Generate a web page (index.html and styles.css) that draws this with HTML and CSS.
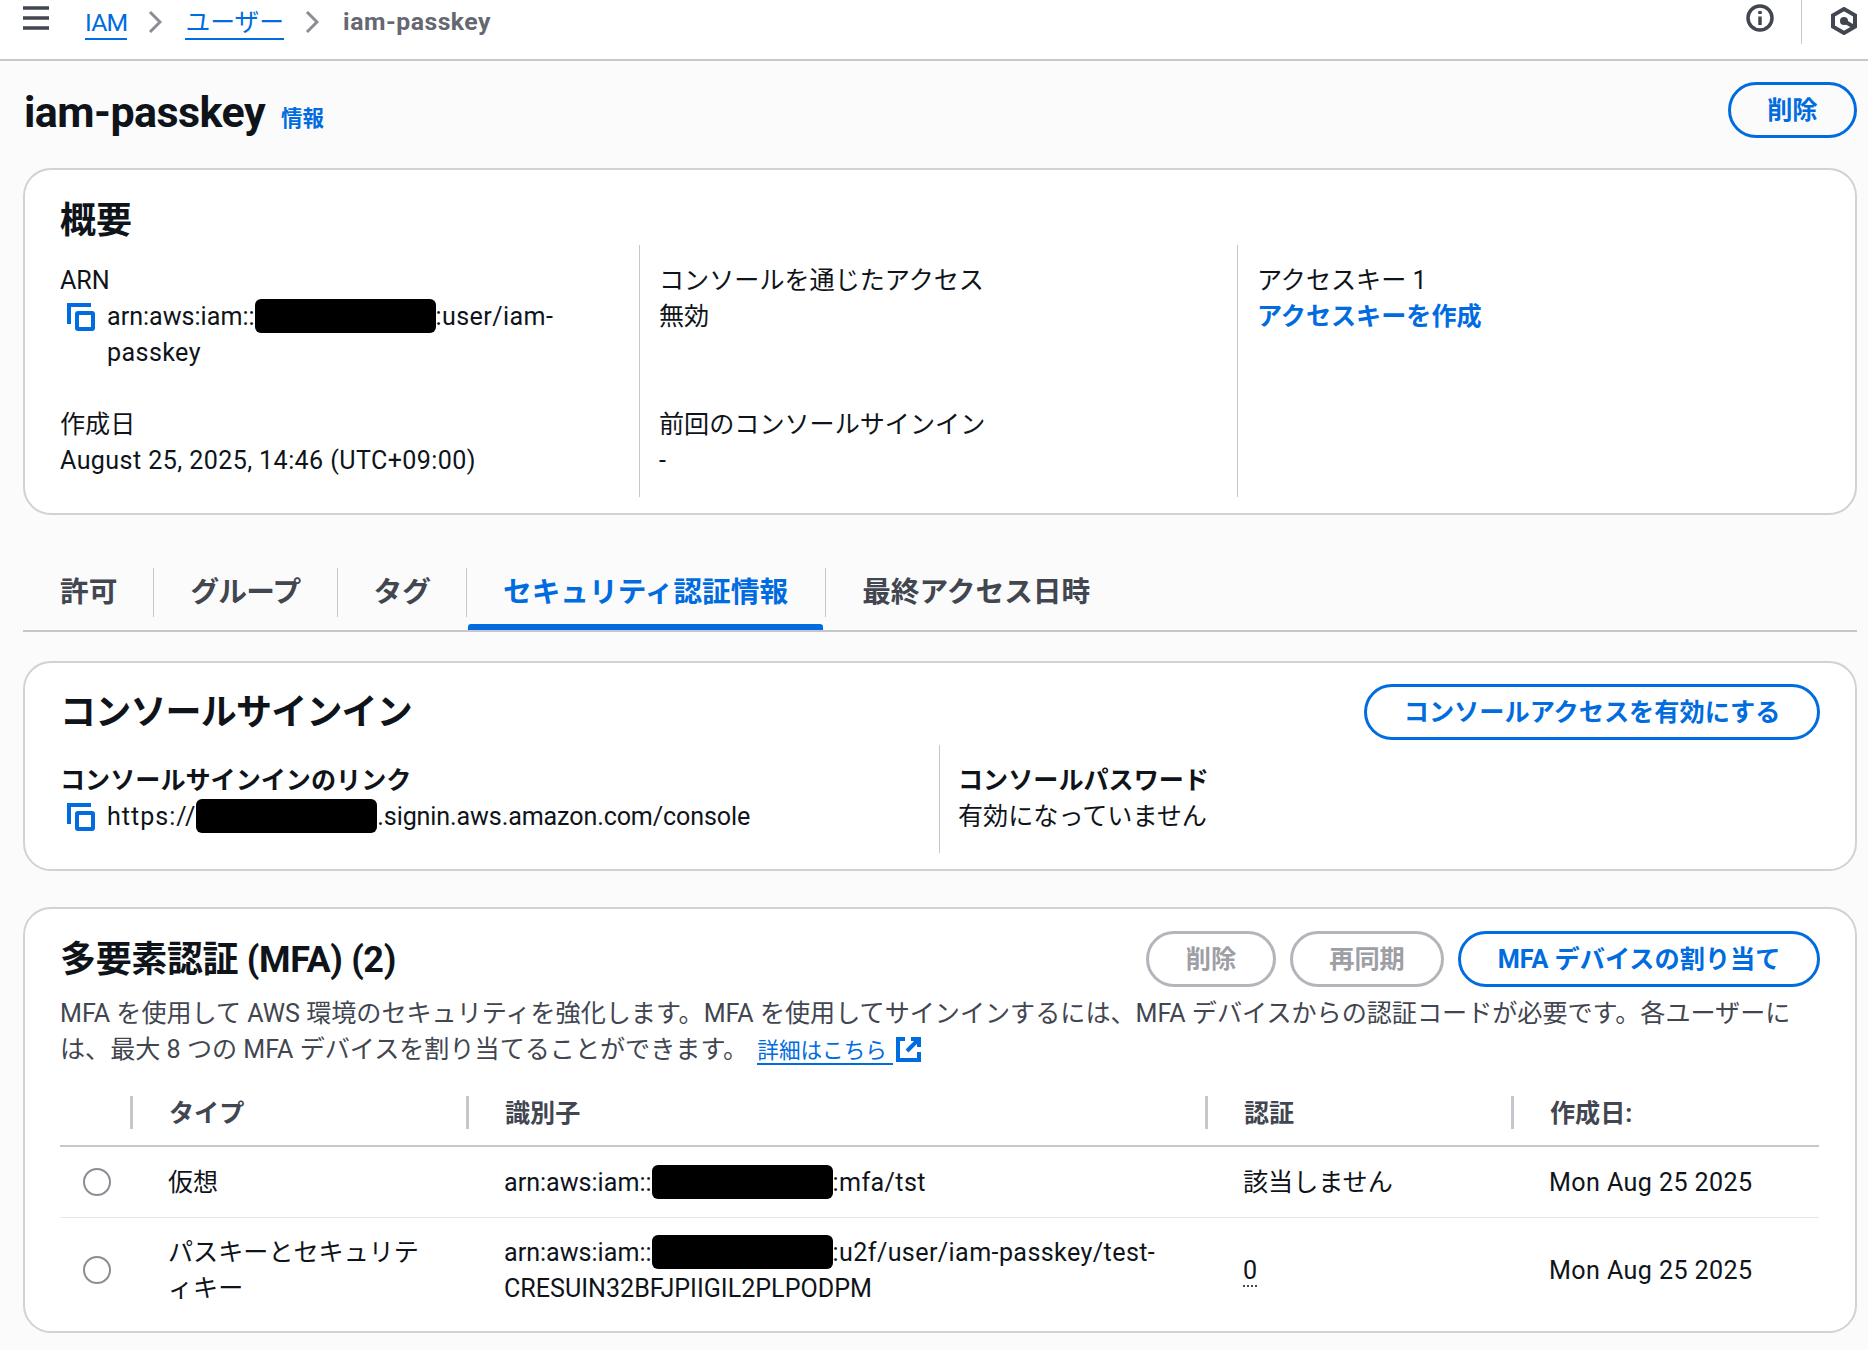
FILE: index.html
```html
<!DOCTYPE html>
<html lang="ja">
<head>
<meta charset="utf-8">
<title>iam-passkey</title>
<link rel="stylesheet" href="styles.css">
</head>
<body>
<header class="topbar">
  <svg class="menu-icon" viewBox="0 0 26 24"><path d="M0 2h26M0 12h26M0 22h26"/></svg>
  <nav class="crumbs">
    <a class="crumb-link crumb-iam">IAM</a>
    <svg class="chev" viewBox="0 0 14 24"><path d="M2 2l10 10L2 22"/></svg>
    <a class="crumb-link">ユーザー</a>
    <svg class="chev" viewBox="0 0 14 24"><path d="M2 2l10 10L2 22"/></svg>
    <span class="crumb-current">iam-passkey</span>
  </nav>
  <div class="top-actions">
    <svg class="info-icon" viewBox="0 0 28 28"><circle cx="14" cy="14" r="12"/><path d="M14 12.500v8.500M14 7v3"/></svg>
    <span class="top-sep"></span>
    <svg class="hex-icon" viewBox="0 0 26 28"><path class="hex-line" d="M13 2l11 6.300v11.400L13 26 2 19.700V8.300z"/><circle class="hex-dot" cx="13" cy="14" r="4"/><path class="hex-line" d="M13 14l10 6"/></svg>
  </div>
</header>
<main class="page">
  <div class="page-head">
    <h1 class="page-title">iam-passkey</h1>
    <a class="info-link">情報</a>
    <button class="btn head-btn">削除</button>
  </div>

  <section class="card summary">
    <h2 class="card-title">概要</h2>
    <div class="summary-grid">
      <div class="summary-col">
        <div>
          <div>ARN</div>
          <div class="copy-row">
            <svg class="copy-icon" viewBox="0 0 28 28"><path d="M2 21V2h22"/><rect x="10" y="10" width="16" height="16" rx="1"/></svg>
            <span class="copy-text">arn:aws:iam::<span class="redact"></span><span class="spaced">:user/iam-passkey</span></span>
          </div>
        </div>
        <div>
          <div>作成日</div>
          <div class="spaced">August 25, 2025, 14:46 (UTC+09:00)</div>
        </div>
      </div>
      <div class="summary-col">
        <div>
          <div>コンソールを通じたアクセス</div>
          <div>無効</div>
        </div>
        <div>
          <div>前回のコンソールサインイン</div>
          <div>-</div>
        </div>
      </div>
      <div class="summary-col last">
        <div>
          <div>アクセスキー 1</div>
          <a class="strong-link">アクセスキーを作成</a>
        </div>
      </div>
    </div>
  </section>

  <div class="tabs">
    <a class="tab">許可</a>
    <a class="tab">グループ</a>
    <a class="tab">タグ</a>
    <a class="tab active">セキュリティ認証情報</a>
    <a class="tab">最終アクセス日時</a>
  </div>

  <section class="card signin">
    <div class="card-head">
      <h2 class="card-title">コンソールサインイン</h2>
      <button class="btn">コンソールアクセスを有効にする</button>
    </div>
    <div class="signin-grid">
      <div class="signin-col">
        <div class="field-label">コンソールサインインのリンク</div>
        <div class="copy-row">
          <svg class="copy-icon" viewBox="0 0 28 28"><path d="M2 21V2h22"/><rect x="10" y="10" width="16" height="16" rx="1"/></svg>
          <span class="copy-text"><span class="scheme">https://</span><span class="redact"></span><span class="host">.signin.aws.amazon.com/console</span></span>
        </div>
      </div>
      <div class="signin-col second">
        <div class="field-label">コンソールパスワード</div>
        <div>有効になっていません</div>
      </div>
    </div>
  </section>

  <section class="card mfa">
    <div class="card-head">
      <h2 class="card-title">多要素認証 (MFA) (2)</h2>
      <div class="btn-group">
        <button class="btn disabled">削除</button>
        <button class="btn disabled">再同期</button>
        <button class="btn">MFA デバイスの割り当て</button>
      </div>
    </div>
    <p class="desc">MFA を使用して AWS 環境のセキュリティを強化します。MFA を使用してサインインするには、MFA デバイスからの認証コードが必要です。各ユーザーには、最大 8 つの MFA デバイスを割り当てることができます。 <a class="ext-link">詳細はこちら</a><svg class="ext-icon" viewBox="0 0 25 25"><path d="M9 2H2v21h21v-8M15 2h8v8M22 3L11 14"/></svg></p>
    <table class="mfa-table">
      <colgroup><col class="c-radio"><col class="c-type"><col class="c-id"><col class="c-auth"><col class="c-date"></colgroup>
      <thead>
        <tr><th></th><th><span>タイプ</span></th><th><span>識別子</span></th><th><span>認証</span></th><th><span>作成日:</span></th></tr>
      </thead>
      <tbody>
        <tr>
          <td class="radio-cell"><span class="radio"></span></td>
          <td>仮想</td>
          <td>arn:aws:iam::<span class="redact"></span><span class="spaced">:mfa/tst</span></td>
          <td>該当しません</td>
          <td class="spaced">Mon Aug 25 2025</td>
        </tr>
        <tr>
          <td class="radio-cell"><span class="radio"></span></td>
          <td>パスキーとセキュリティキー</td>
          <td>arn:aws:iam::<span class="redact"></span><span class="spaced">:u2f/user/iam-passkey/test-</span>CRESUIN32BFJPIIGIL2PLPODPM</td>
          <td><span class="dotted">0</span></td>
          <td class="spaced">Mon Aug 25 2025</td>
        </tr>
      </tbody>
    </table>
  </section>
</main>
</body>
</html>
```
FILE: styles.css
```css
* { box-sizing: border-box; }
html, body { margin: 0; padding: 0; }
body {
  width: 1868px;
  height: 1350px;
  overflow: hidden;
  background: #fbfbfb;
  color: #0f141a;
  font-family: Roboto, "Noto Sans CJK JP", sans-serif;
  font-size: 25.1px;
  line-height: 36px;
}
a { color: #006ce0; }
h1, h2, p { margin: 0; }
.spaced { letter-spacing: .4px; }
.scheme { letter-spacing: 1px; }
.host { letter-spacing: -.12px; }

.topbar {
  height: 61px;
  background: #fff;
  border-bottom: 2px solid #c6c6cd;
  display: flex;
  align-items: flex-start;
  padding-left: 23px;
}
.menu-icon { width: 26px; height: 24px; margin-top: 6px; fill: none; stroke: #424650; stroke-width: 3.5; }
.crumbs { display: flex; align-items: center; margin-left: 36px; height: 43px; color: #424650; font-size: 24.8px; }
.crumb-link { border-bottom: 2px solid #006ce0; line-height: 39px; height: 37px; }
.crumb-iam { letter-spacing: -.8px; }
.crumb-current { font-weight: 700; color: #656871; line-height: 39px; letter-spacing: .5px; margin-left: 1px; }
.chev { width: 14px; height: 24px; margin: 0 23px 0 21px; fill: none; stroke: #8c8c94; stroke-width: 3; }
.top-actions { margin-left: auto; display: flex; align-items: flex-start; }
.info-icon { width: 28px; height: 28px; margin-top: 4px; fill: none; stroke: #424650; stroke-width: 3.5; }
.top-sep { width: 1px; height: 44px; background: #c6c6cd; margin: 0 29px 0 27px; }
.hex-icon { width: 26px; height: 28px; margin-top: 7px; margin-right: 11px; }
.hex-line { fill: none; stroke: #424650; stroke-width: 4; }
.hex-dot { fill: #424650; }

.page { padding: 0 11px 0 23px; }
.page-head { display: flex; align-items: center; height: 107px; }
.page-title { font-size: 43px; line-height: 56px; font-weight: 700; margin: -6px 0 0 1px; letter-spacing: -.55px; }
.info-link { font-size: 21.5px; font-weight: 600; margin: 8px 0 0 16px; }
.head-btn { margin-left: auto; margin-top: -10px; }

.btn {
  height: 56px;
  padding: 2px 36.5px 0;
  border: 3px solid #006ce0;
  border-radius: 28px;
  background: transparent;
  color: #006ce0;
  font: 700 25.2px/36px Roboto, "Noto Sans CJK JP", sans-serif;
  white-space: nowrap;
}
.btn.disabled { border-color: #b4b4bb; color: #9e9ea5; }

.card {
  background: #fff;
  border: 2px solid #d1d1d6;
  border-radius: 28px;
  padding: 0 35px;
}
.card-title { font-size: 36px; line-height: 50px; font-weight: 700; padding-top: 2px; }

.summary { height: 347px; padding-top: 25px; }
.summary .card-title { height: 50px; padding-top: 1px; }
.summary-grid { display: grid; grid-template-columns: 580px 598px 1fr; height: 252px; }
.summary-col {
  display: grid;
  grid-template-rows: 108px 72px;
  row-gap: 36px;
  padding-top: 18px;
  padding-left: 19px;
  border-right: 1px solid #c6c6cd;
}
.summary-col:first-child { padding-left: 0; }
.summary-col.last { border-right: 0; }
.copy-row { display: flex; align-items: flex-start; padding-left: 7px; }
.copy-icon { flex: none; width: 28px; height: 28px; margin: 4px 12px 0 0; fill: none; stroke: #006ce0; stroke-width: 4; }
.copy-text { max-width: 510px; }
.redact {
  display: inline-block;
  width: 181px;
  height: 34px;
  margin: -8px 0 -4px;
  vertical-align: middle;
  background: #000;
  border-radius: 6px;
}
.strong-link { font-weight: 700; }

.tabs {
  display: flex;
  height: 117px;
  padding-top: 53px;
  border-bottom: 2px solid #c6c6cd;
  margin-bottom: 29px;
}
.tab {
  height: 62px;
  padding: 0 37px;
  font-size: 28.7px;
  line-height: 48px;
  font-weight: 700;
  color: #424650;
  position: relative;
}
.tab:nth-child(1) { padding-right: 36px; }
.tab:nth-child(2) { letter-spacing: -.7px; padding-right: 36px; }
.tab:nth-child(3) { padding-right: 35px; }
.tab + .tab::before {
  content: "";
  position: absolute;
  left: 0;
  top: 0;
  height: 49px;
  width: 1px;
  background: #c6c6cd;
}
.tab.active { color: #006ce0; }
.tab.active::after {
  content: "";
  position: absolute;
  left: 2px;
  right: 2px;
  bottom: 0;
  height: 6px;
  background: #006ce0;
  border-radius: 3px 3px 0 0;
}

.signin { height: 210px; padding-top: 21px; }
.signin .card-title { letter-spacing: -.8px; }
.card-head { display: flex; justify-content: space-between; align-items: center; height: 56px; }
.signin-grid { display: grid; grid-template-columns: 879px 1fr; margin-top: 5px; height: 108px; }
.signin-col { padding-top: 18px; }
.signin-col.second { padding-left: 18px; border-left: 1px solid #c6c6cd; }
.field-label { font-weight: 700; }
.signin .copy-text { max-width: none; }

.mfa { margin-top: 36px; height: 426px; padding-top: 22px; }
.mfa .card-title { letter-spacing: -.35px; }
.btn-group { display: flex; gap: 14px; }
.desc { margin-top: 9px; color: #424650; width: 1762px; }
.ext-link { font-size: 21.6px; border-bottom: 2px solid #006ce0; padding-right: 6px; margin-left: 3px; }
.ext-icon { width: 25px; height: 25px; vertical-align: -4px; margin-left: 3px; fill: none; stroke: #006ce0; stroke-width: 4; }

.mfa-table { width: 1759px; border-collapse: collapse; table-layout: fixed; margin-top: 27px; }
.c-radio { width: 70px; }
.c-type { width: 336px; }
.c-id { width: 739px; }
.c-auth { width: 306px; }
.c-date { width: 308px; }
.mfa-table th {
  text-align: left;
  font-weight: 700;
  color: #424650;
  padding: 0 0 16px 0;
  border-bottom: 2px solid #c6c6cd;
  vertical-align: top;
}
.mfa-table th span {
  display: block;
  height: 33px;
  line-height: 36px;
  padding-left: 36px;
  border-left: 3px solid #c6c6cd;
}
.mfa-table td { padding: 17px 30px 16px 38px; border-bottom: 1px solid #e8e8ec; vertical-align: middle; }
.mfa-table tbody tr:first-child td { padding-top: 18px; }
.mfa-table tbody tr:last-child td { border-bottom: 0; }
.mfa-table .radio-cell { padding: 17px 0 16px 23px; }
.mfa-table tbody tr:first-child .radio-cell { padding-top: 18px; }
.radio { display: block; width: 28px; height: 28px; margin-top: -2px; border: 2px solid #8c8c94; border-radius: 50%; }
.dotted { border-bottom: 2px dotted #424650; }
```
